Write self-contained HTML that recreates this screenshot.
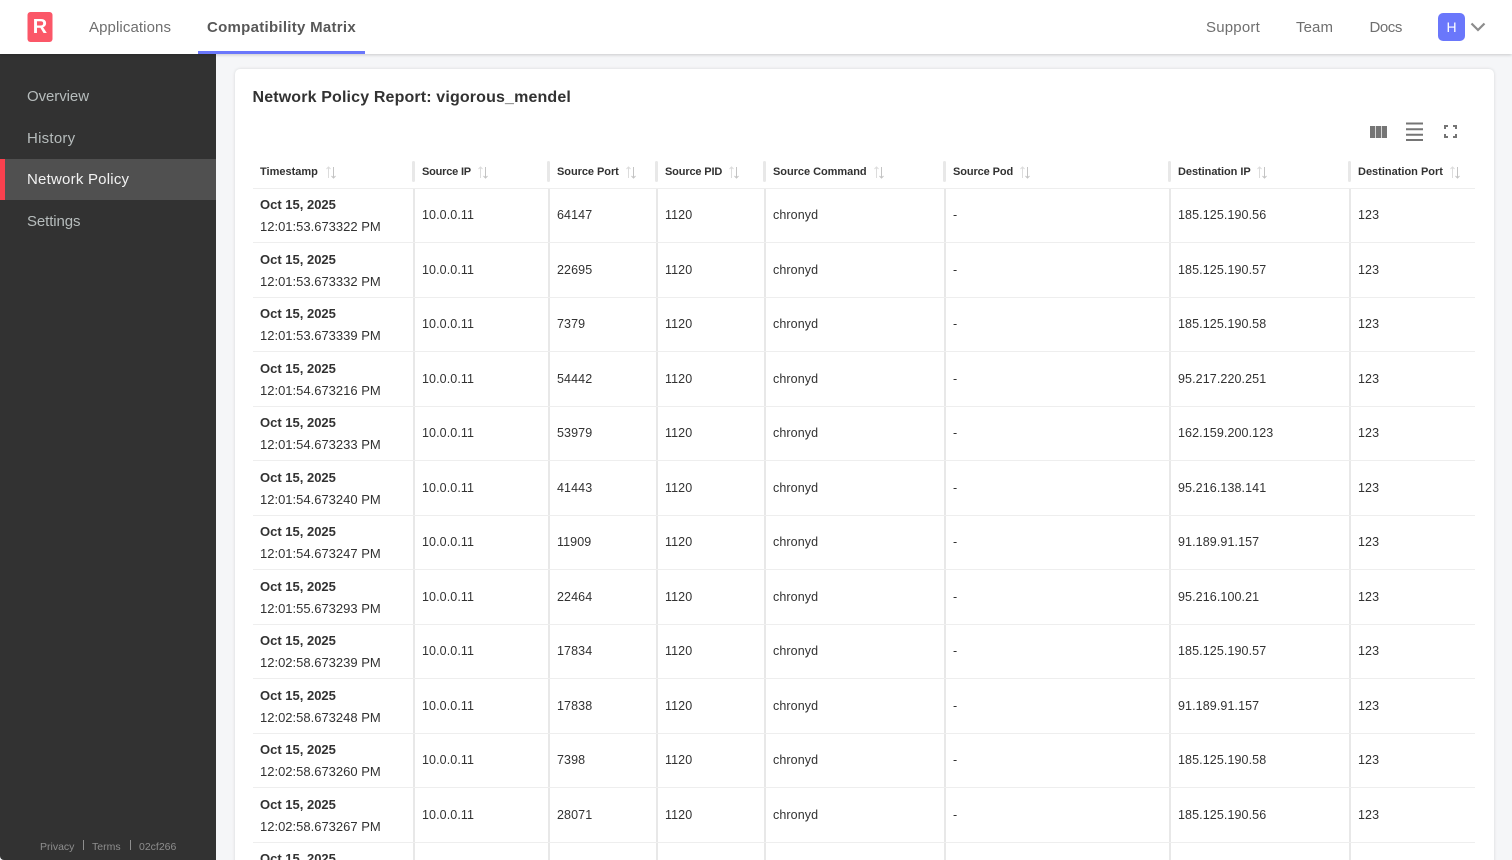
<!DOCTYPE html>
<html><head><meta charset="utf-8"><title>Network Policy</title>
<style>
*{box-sizing:border-box}
html,body{margin:0;padding:0;width:1512px;height:860px;overflow:hidden;background:#f5f6f8;font-family:"Liberation Sans",sans-serif;color:#323232}
#root{position:absolute;left:0;top:0;width:1512px;height:860px;overflow:hidden;background:#f5f6f8}
.a{position:absolute;white-space:nowrap}
#top{position:absolute;left:0;top:0;width:1512px;height:54px;background:#fff;box-shadow:0 1px 3px rgba(0,0,0,.18);z-index:3}
.nav{position:absolute;top:18px;font-size:15px;line-height:20px;color:#6f6f6f;white-space:nowrap}
#side{position:absolute;left:0;top:54px;width:216px;height:806px;background:#323232;border-bottom-left-radius:4px;z-index:2}
.si{position:absolute;left:27px;font-size:15px;line-height:20px;color:#b6bcbc;white-space:nowrap}
.foot{position:absolute;top:786px;font-size:10.5px;line-height:14px;color:#8e8e8e;white-space:nowrap}
#card{position:absolute;left:235px;top:69px;width:1259px;height:800px;background:#fff;border-radius:5px;box-shadow:0 0 3px rgba(0,0,0,.13)}
#tbl{position:absolute;left:0;top:0;width:1512px;height:860px;overflow:hidden}
.th{position:absolute;top:165px;font-size:11px;line-height:14px;font-weight:bold;color:#323232;white-space:nowrap}
.hd{position:absolute;top:161px;width:3px;height:21px;background:#e8e8e8;border-radius:1.500px}
.vl{position:absolute;top:188px;width:1.500px;height:672px;background:#e8e8e8}
.hl{position:absolute;left:253px;width:1222px;height:1px;background:#eeeeee}
.r{position:absolute;left:0;width:1512px;height:54px;font-size:12.5px;color:#323232;letter-spacing:.1px}
.r span{position:absolute;white-space:nowrap;line-height:16px;top:20px}
.r span:nth-of-type(1){left:422px}
.r span:nth-of-type(2){left:557px}
.r span:nth-of-type(3){left:665px}
.r span:nth-of-type(4){left:773px}
.r span:nth-of-type(5){left:953px}
.r span:nth-of-type(6){left:1178px}
.r span:nth-of-type(7){left:1358px}
.r b{position:absolute;left:260px;top:10px;line-height:16px;font-size:13px;white-space:nowrap;font-weight:bold;letter-spacing:0}
.r i{position:absolute;left:260px;top:32px;line-height:16px;font-size:13px;font-style:normal;white-space:nowrap;letter-spacing:0}
.s{position:absolute;top:166px}
</style></head><body>
<div id="root">

<div id="top">
<svg class="a" style="left:27px;top:12px" width="26" height="30" viewBox="0 0 26 30"><rect x="0.5" y="0" width="25" height="30" rx="3" fill="#fb5768"/></svg>
<div class="a" style="left:27px;top:12px;width:26px;height:30px;text-align:center;font-size:20px;line-height:30px;font-weight:bold;color:#fff">R</div>
<div class="nav" style="left:89px;top:18px;letter-spacing:.1px">Applications</div>
<div class="nav" style="left:207px;font-weight:bold;color:#585858;letter-spacing:.28px">Compatibility Matrix</div>
<div class="a" style="left:198px;top:51px;width:167px;height:3px;background:#6a77fb"></div>
<div class="nav" style="left:1206px;letter-spacing:.2px">Support</div>
<div class="nav" style="left:1296px;letter-spacing:.1px">Team</div>
<div class="nav" style="left:1369.500px;letter-spacing:-.45px">Docs</div>
<div class="a" style="left:1438px;top:13px;width:27px;height:28px;border-radius:5px;background:#6a77fb;color:#fff;font-size:14px;line-height:28px;text-align:center">H</div>
<svg class="a" style="left:1470px;top:22px" width="16" height="10" viewBox="0 0 16 10"><path d="M1.500 1.500 L8 8 L14.500 1.500" fill="none" stroke="#8c8c8c" stroke-width="2.200"/></svg>
</div>

<div id="side">
<div class="si" style="top:33px;letter-spacing:-.07px">Overview</div>
<div class="si" style="top:75px;letter-spacing:.25px">History</div>
<div class="a" style="left:0;top:105px;width:216px;height:41px;background:#505050"></div>
<div class="a" style="left:0;top:105px;width:5px;height:41px;background:#f9404e"></div>
<div class="si" style="top:116px;color:#f2f2f2;letter-spacing:.22px">Network Policy</div>
<div class="si" style="top:158px;letter-spacing:-.1px">Settings</div>
<div class="foot" style="left:40px;">Privacy</div>
<div class="a" style="left:83px;top:786px;width:1px;height:10px;background:#8e8e8e"></div>
<div class="foot" style="left:92px">Terms</div>
<div class="a" style="left:130px;top:786px;width:1px;height:10px;background:#8e8e8e"></div>
<div class="foot" style="left:139px;">02cf266</div>
</div>

<div id="card"></div>

<div id="tbl">
<div class="a" style="left:252.500px;top:88px;font-size:16px;line-height:20px;font-weight:bold;color:#323232;letter-spacing:.145px">Network Policy Report: vigorous_mendel</div>

<svg class="a" style="left:1370px;top:126px" width="17" height="12"><path d="M0 0H5.300V12H0ZM6 0H11V12H6ZM11.700 0H17V12H11.700Z" fill="#757575"/></svg>
<svg class="a" style="left:1406px;top:122px" width="17" height="19"><path d="M0 1.500H17M0 7.200H17M0 12.800H17M0 18H17" stroke="#757575" stroke-width="2"/></svg>
<svg class="a" style="left:1444px;top:125px" width="13" height="13" fill="none" stroke="#757575" stroke-width="2"><path d="M1 4V1H4M9 1H12V4M12 9V12H9M4 12H1V9"/></svg>

<div class="th" style="left:260px">Timestamp</div>
<div class="th" style="left:422px;letter-spacing:-.2px">Source IP</div>
<div class="th" style="left:557px;letter-spacing:-.05px">Source Port</div>
<div class="th" style="left:665px;letter-spacing:-.15px">Source PID</div>
<div class="th" style="left:773px;letter-spacing:-.04px">Source Command</div>
<div class="th" style="left:953px;letter-spacing:-.1px">Source Pod</div>
<div class="th" style="left:1178px;letter-spacing:-.05px">Destination IP</div>
<div class="th" style="left:1358px">Destination Port</div>

<svg class="s" style="left:325px" width="12" height="13"><path d="M3.500 12V1M1.500 3L3.500 1L5.500 3" fill="none" stroke="#dcdcdc"/><path d="M8.500 1V12M6.500 10L8.500 12L10.500 10" fill="none" stroke="#c4c4c4"/></svg>
<svg class="s" style="left:477px" width="12" height="13"><path d="M3.500 12V1M1.500 3L3.500 1L5.500 3" fill="none" stroke="#dcdcdc"/><path d="M8.500 1V12M6.500 10L8.500 12L10.500 10" fill="none" stroke="#c4c4c4"/></svg>
<svg class="s" style="left:625px" width="12" height="13"><path d="M3.500 12V1M1.500 3L3.500 1L5.500 3" fill="none" stroke="#dcdcdc"/><path d="M8.500 1V12M6.500 10L8.500 12L10.500 10" fill="none" stroke="#c4c4c4"/></svg>
<svg class="s" style="left:728px" width="12" height="13"><path d="M3.500 12V1M1.500 3L3.500 1L5.500 3" fill="none" stroke="#dcdcdc"/><path d="M8.500 1V12M6.500 10L8.500 12L10.500 10" fill="none" stroke="#c4c4c4"/></svg>
<svg class="s" style="left:873px" width="12" height="13"><path d="M3.500 12V1M1.500 3L3.500 1L5.500 3" fill="none" stroke="#dcdcdc"/><path d="M8.500 1V12M6.500 10L8.500 12L10.500 10" fill="none" stroke="#c4c4c4"/></svg>
<svg class="s" style="left:1019px" width="12" height="13"><path d="M3.500 12V1M1.500 3L3.500 1L5.500 3" fill="none" stroke="#dcdcdc"/><path d="M8.500 1V12M6.500 10L8.500 12L10.500 10" fill="none" stroke="#c4c4c4"/></svg>
<svg class="s" style="left:1256px" width="12" height="13"><path d="M3.500 12V1M1.500 3L3.500 1L5.500 3" fill="none" stroke="#dcdcdc"/><path d="M8.500 1V12M6.500 10L8.500 12L10.500 10" fill="none" stroke="#c4c4c4"/></svg>
<svg class="s" style="left:1449px" width="12" height="13"><path d="M3.500 12V1M1.500 3L3.500 1L5.500 3" fill="none" stroke="#dcdcdc"/><path d="M8.500 1V12M6.500 10L8.500 12L10.500 10" fill="none" stroke="#c4c4c4"/></svg>

<div class="hd" style="left:412px"></div><div class="hd" style="left:547px"></div><div class="hd" style="left:655px"></div><div class="hd" style="left:763px"></div><div class="hd" style="left:943px"></div><div class="hd" style="left:1168px"></div><div class="hd" style="left:1348px"></div>
<div class="vl" style="left:413px"></div><div class="vl" style="left:548px"></div><div class="vl" style="left:656px"></div><div class="vl" style="left:764px"></div><div class="vl" style="left:944px"></div><div class="vl" style="left:1169px"></div><div class="vl" style="left:1349px"></div>

<div class="hl" style="top:188px"></div><div class="hl" style="top:242px"></div><div class="hl" style="top:297px"></div><div class="hl" style="top:351px"></div><div class="hl" style="top:406px"></div><div class="hl" style="top:460px"></div><div class="hl" style="top:515px"></div><div class="hl" style="top:569px"></div><div class="hl" style="top:624px"></div><div class="hl" style="top:678px"></div><div class="hl" style="top:733px"></div><div class="hl" style="top:787px"></div><div class="hl" style="top:842px"></div>

<div class="r" style="top:187px"><b>Oct 15, 2025</b><i>12:01:53.673322 PM</i><span>10.0.0.11</span><span>64147</span><span>1120</span><span>chronyd</span><span>-</span><span>185.125.190.56</span><span>123</span></div>
<div class="r" style="top:242px"><b>Oct 15, 2025</b><i>12:01:53.673332 PM</i><span>10.0.0.11</span><span>22695</span><span>1120</span><span>chronyd</span><span>-</span><span>185.125.190.57</span><span>123</span></div>
<div class="r" style="top:296px"><b>Oct 15, 2025</b><i>12:01:53.673339 PM</i><span>10.0.0.11</span><span>7379</span><span>1120</span><span>chronyd</span><span>-</span><span>185.125.190.58</span><span>123</span></div>
<div class="r" style="top:351px"><b>Oct 15, 2025</b><i>12:01:54.673216 PM</i><span>10.0.0.11</span><span>54442</span><span>1120</span><span>chronyd</span><span>-</span><span>95.217.220.251</span><span>123</span></div>
<div class="r" style="top:405px"><b>Oct 15, 2025</b><i>12:01:54.673233 PM</i><span>10.0.0.11</span><span>53979</span><span>1120</span><span>chronyd</span><span>-</span><span>162.159.200.123</span><span>123</span></div>
<div class="r" style="top:460px"><b>Oct 15, 2025</b><i>12:01:54.673240 PM</i><span>10.0.0.11</span><span>41443</span><span>1120</span><span>chronyd</span><span>-</span><span>95.216.138.141</span><span>123</span></div>
<div class="r" style="top:514px"><b>Oct 15, 2025</b><i>12:01:54.673247 PM</i><span>10.0.0.11</span><span>11909</span><span>1120</span><span>chronyd</span><span>-</span><span>91.189.91.157</span><span>123</span></div>
<div class="r" style="top:569px"><b>Oct 15, 2025</b><i>12:01:55.673293 PM</i><span>10.0.0.11</span><span>22464</span><span>1120</span><span>chronyd</span><span>-</span><span>95.216.100.21</span><span>123</span></div>
<div class="r" style="top:623px"><b>Oct 15, 2025</b><i>12:02:58.673239 PM</i><span>10.0.0.11</span><span>17834</span><span>1120</span><span>chronyd</span><span>-</span><span>185.125.190.57</span><span>123</span></div>
<div class="r" style="top:678px"><b>Oct 15, 2025</b><i>12:02:58.673248 PM</i><span>10.0.0.11</span><span>17838</span><span>1120</span><span>chronyd</span><span>-</span><span>91.189.91.157</span><span>123</span></div>
<div class="r" style="top:732px"><b>Oct 15, 2025</b><i>12:02:58.673260 PM</i><span>10.0.0.11</span><span>7398</span><span>1120</span><span>chronyd</span><span>-</span><span>185.125.190.58</span><span>123</span></div>
<div class="r" style="top:787px"><b>Oct 15, 2025</b><i>12:02:58.673267 PM</i><span>10.0.0.11</span><span>28071</span><span>1120</span><span>chronyd</span><span>-</span><span>185.125.190.56</span><span>123</span></div>
<div class="r" style="top:841px"><b>Oct 15, 2025</b></div>
</div>
</div>
</body></html>
